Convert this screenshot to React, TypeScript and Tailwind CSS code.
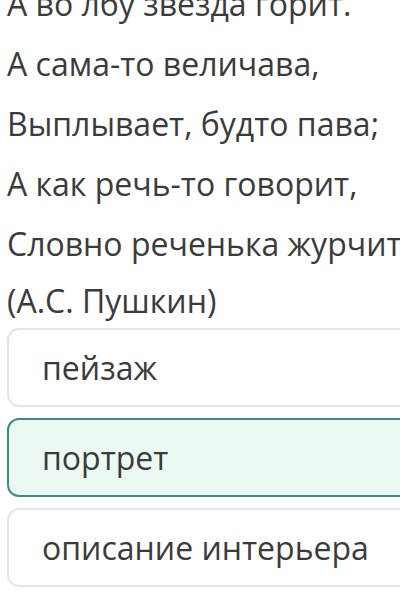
import React from "react";

const lines = [
  "А во лбу звезда горит.",
  "А сама-то величава,",
  "Выплывает, будто пава;",
  "А как речь-то говорит,",
  "Словно реченька журчит.",
];

const options = [
  { text: "пейзаж", selected: false },
  { text: "портрет", selected: true },
  { text: "описание интерьера", selected: false },
];

export default function App() {
  return (
    <div
      className="w-[400px] h-[608px] overflow-hidden bg-white text-[#3b3b3b]"
      style={{ fontFamily: '"Open Sans", "Noto Sans", sans-serif' }}
    >
      <div className="-mt-[26px] pl-[7px] text-[32px] leading-[60px] whitespace-nowrap">
        {lines.map((l) => (
          <div key={l}>{l}</div>
        ))}
        <div className="-mt-[3px]">(А.С. Пушкин)</div>
      </div>
      <div className="-mt-[3px] pl-[7px] flex flex-col gap-[11px]">
        {options.map((o) => (
          <div
            key={o.text}
            className={
              o.selected
                ? "w-[430px] h-[79px] shrink-0 rounded-[12px] border-2 border-[#3f8a82] bg-[#ecf9f3] flex items-center pl-[33px] text-[32px] whitespace-nowrap"
                : "w-[430px] h-[79px] shrink-0 rounded-[12px] border-2 border-[#e6e6e6] bg-white flex items-center pl-[33px] text-[32px] whitespace-nowrap"
            }
          >
            {o.text}
          </div>
        ))}
      </div>
    </div>
  );
}
